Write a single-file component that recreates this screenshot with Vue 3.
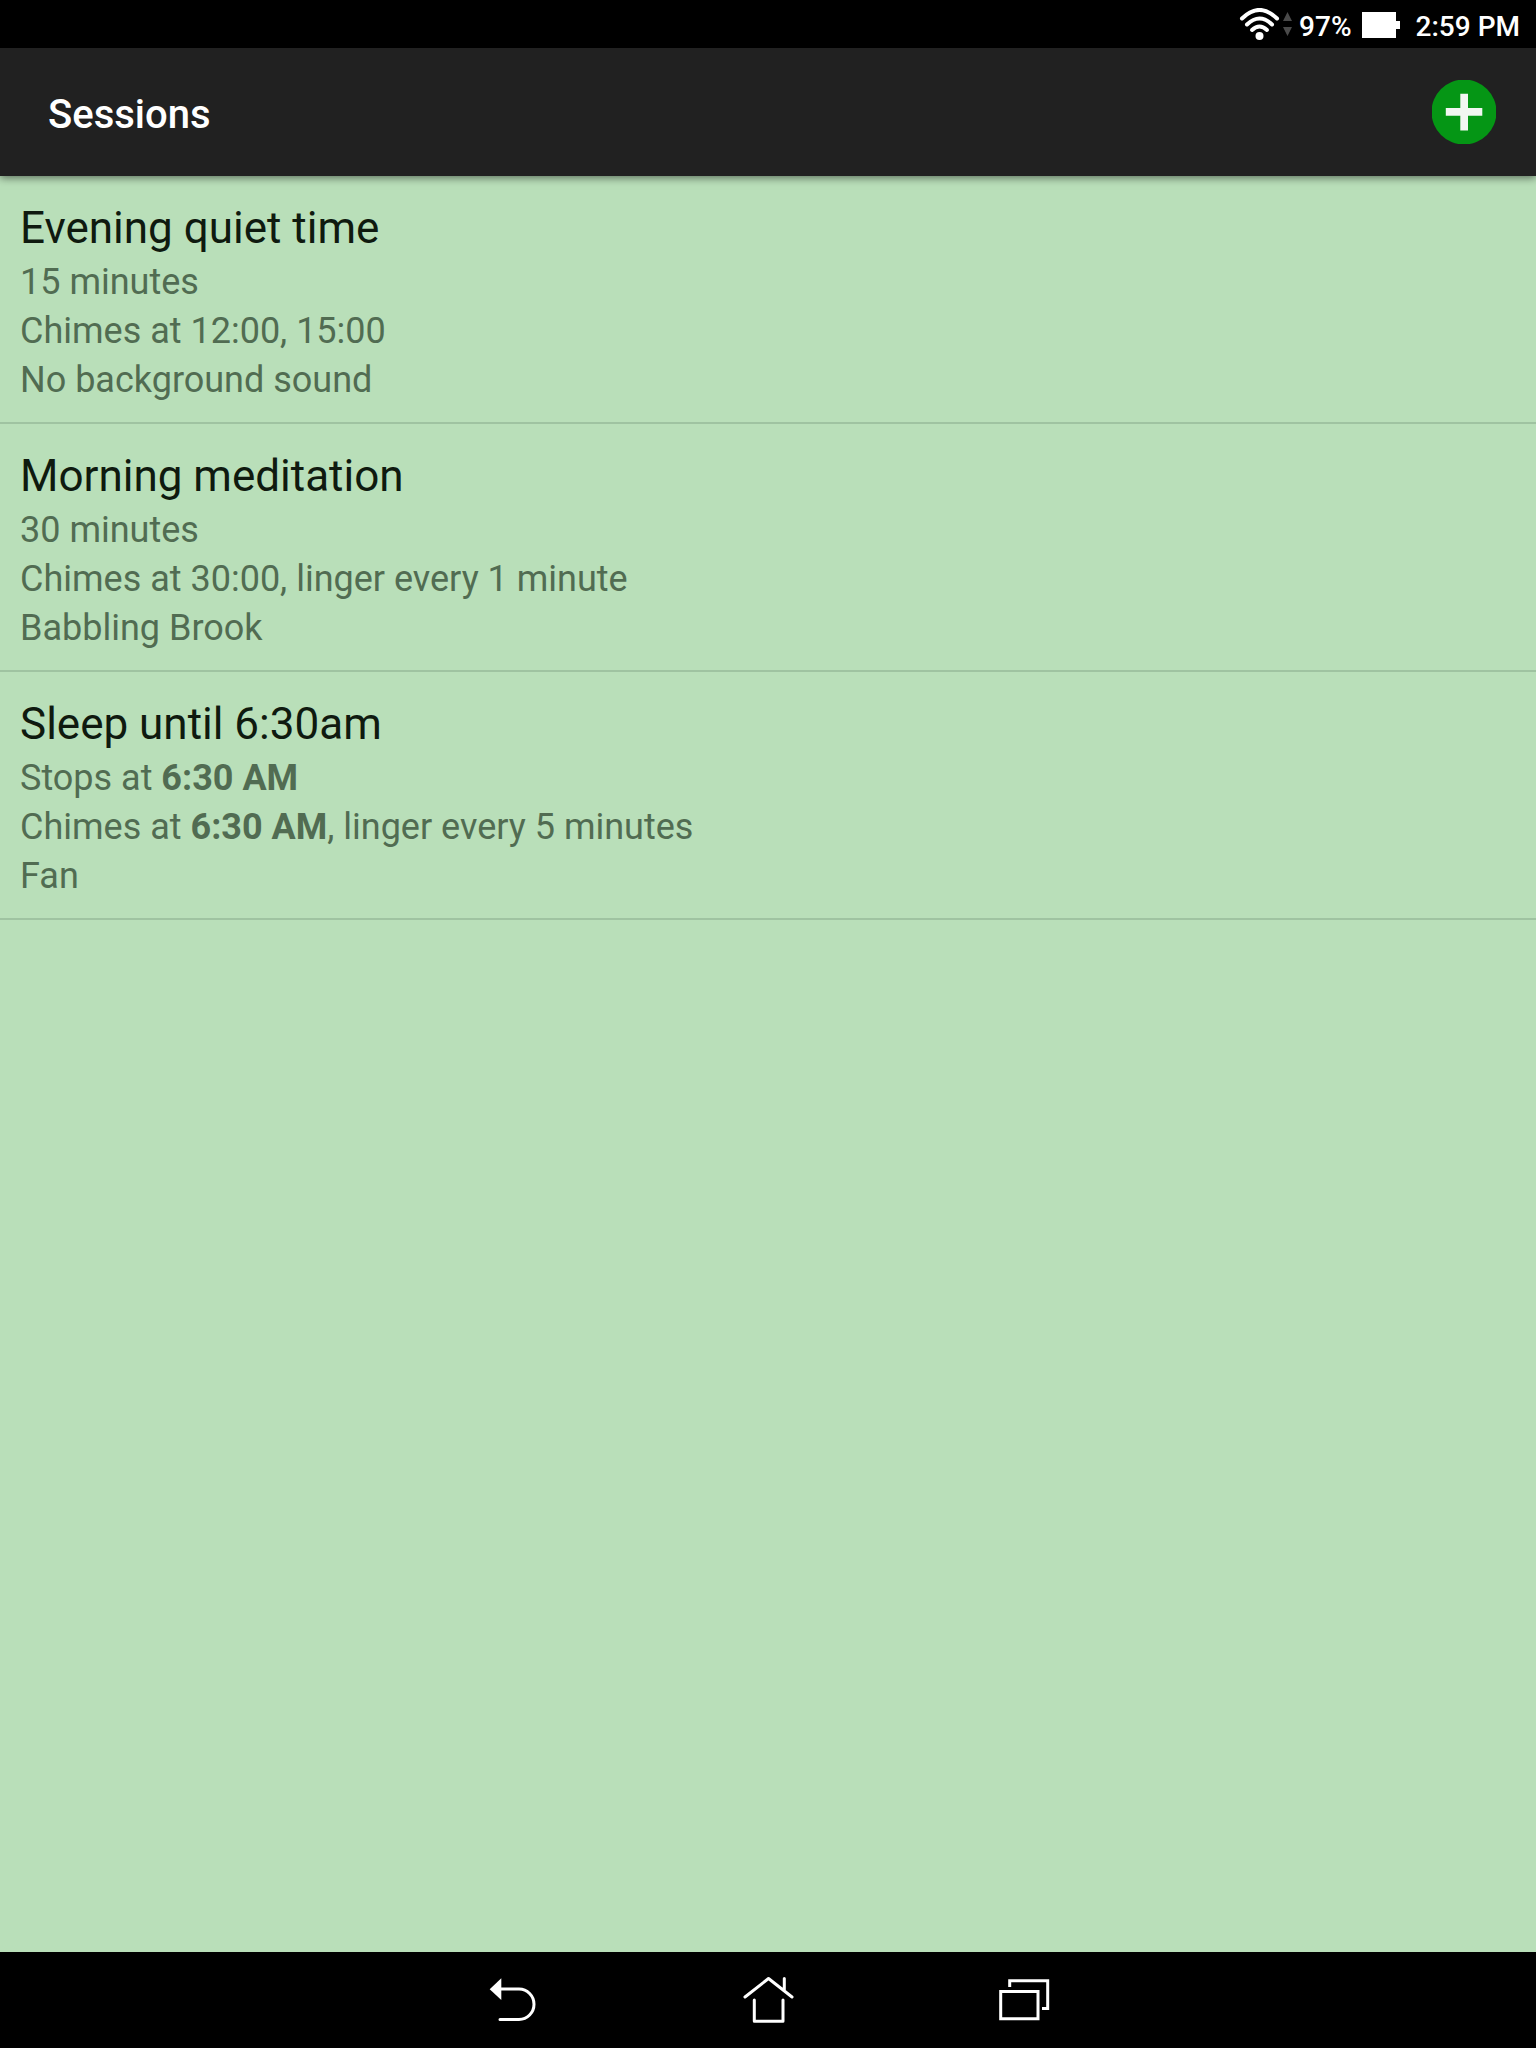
<!--
  Sessions page
  Lists the saved meditation sessions, with a button to add a new one
-->
<template>
  <div class="screen">
    <!-- Status bar -->
    <div class="status-bar">
      <svg class="wifi-icon" viewBox="0 0 56 32" aria-hidden="true">
        <g fill="none" stroke="#fff" stroke-width="4" stroke-linecap="round">
          <path d="M3 10.5Q20.500 -6.500 38 10.500" />
          <path d="M8 16.500Q20.500 4.500 33 16.500" />
          <path d="M13 22Q20.500 15 28 22" />
        </g>
        <circle cx="20.500" cy="28" r="4" fill="#fff" />
        <path d="M44 13L48.500 4L53 13ZM44 19H53L48.500 28Z" fill="#4a4a4a" />
      </svg>
      <span class="battery-level">97%</span>
      <svg class="battery-icon" viewBox="0 0 38 26" aria-hidden="true">
        <path d="M0 0H34V9H38V17H34V26H0Z" fill="#fff" />
      </svg>
      <span class="clock">2:59 PM</span>
    </div>

    <!-- App bar -->
    <header class="app-bar">
      <h1>Sessions</h1>
      <button class="btn-add" aria-label="Add session" @click="addSession">
        <svg viewBox="0 0 64 64" aria-hidden="true">
          <circle cx="32" cy="32" r="32.500" fill="#059615" />
          <path d="M28.300 13.800H36V28H50.300V35.700H36V50.500H28.300V35.700H13.800V28H28.300Z" fill="#f2f7f2" />
        </svg>
      </button>
    </header>

    <!-- Session list -->
    <main class="content">
      <ul class="session-list">
        <li v-for="item in sessions" :key="item.id">
          <button class="session" @click="selectedId = item.id">
            <span class="session-name">{{ item.name }}</span>
            <span v-for="(line, i) in item.details" :key="i" class="session-detail">
              <template v-for="(part, j) in line" :key="j">
                <b v-if="part.bold">{{ part.text }}</b>
                <template v-else>{{ part.text }}</template>
              </template>
            </span>
          </button>
        </li>
      </ul>
    </main>

    <!-- Navigation bar -->
    <nav class="nav-bar">
      <button aria-label="Back">
        <svg viewBox="0 0 64 64" aria-hidden="true">
          <path d="M9.700 21.200L21.300 10.300V32Z" fill="#fff" stroke="none" />
          <path d="M20 21H39A15 15.200 0 0 1 39 51.400H20" />
        </svg>
      </button>
      <button aria-label="Home">
        <svg viewBox="0 0 64 64" aria-hidden="true">
          <path d="M9 29L32.500 10.500L56 29M48.300 10.500V22" />
          <path d="M18.300 32V53.200H47V32" />
        </svg>
      </button>
      <button aria-label="Recent apps">
        <svg class="square" viewBox="0 0 64 64" aria-hidden="true">
          <path d="M8.700 23.500H46V50.700H8.700Z" />
          <path d="M17.700 19V12.800H55.700V40.400H50" />
        </svg>
      </button>
    </nav>
  </div>
</template>

<script setup>
import { ref } from 'vue'

// Session last tapped
const selectedId = ref(null)

// Each detail line is split into plain and bold parts
const sessions = ref([
  {
    id: 1,
    name: 'Evening quiet time',
    details: [
      [{ text: '15 minutes' }],
      [{ text: 'Chimes at 12:00, 15:00' }],
      [{ text: 'No background sound' }]
    ]
  },
  {
    id: 2,
    name: 'Morning meditation',
    details: [
      [{ text: '30 minutes' }],
      [{ text: 'Chimes at 30:00, linger every 1 minute' }],
      [{ text: 'Babbling Brook' }]
    ]
  },
  {
    id: 3,
    name: 'Sleep until 6:30am',
    details: [
      [{ text: 'Stops at ' }, { text: '6:30 AM', bold: true }],
      [{ text: 'Chimes at ' }, { text: '6:30 AM', bold: true }, { text: ', linger every 5 minutes' }],
      [{ text: 'Fan' }]
    ]
  }
])

/** Add an empty session at the end of the list */
function addSession() {
  sessions.value.push({
    id: Date.now(),
    name: 'New session',
    details: [[{ text: '15 minutes' }], [{ text: 'No chimes' }], [{ text: 'No background sound' }]]
  })
}
</script>

<style>
body { margin: 0; background: #b9dfb9; }
</style>

<style scoped>
.screen { display: flex; flex-direction: column; min-height: 100vh; background: #b9dfb9; font-family: Roboto, "Liberation Sans", sans-serif; }
button { padding: 0; border: none; background: none; font: inherit; color: inherit; cursor: pointer; }
svg { display: block; }

/* Status bar */
.status-bar { display: flex; justify-content: flex-end; align-items: center; height: 48px; padding: 0 16px; background: #000; color: #fff; font-size: 28px; font-weight: 500; line-height: 42px; }
.status-bar span { padding-top: 6px; }
.wifi-icon { width: 56px; height: 32px; margin-right: 4px; }
.battery-icon { width: 38px; height: 26px; margin: 2px 16px 0 10px; }

/* App bar */
.app-bar { display: flex; justify-content: space-between; align-items: center; height: 128px; padding: 0 40px 0 48px; background: #212121; color: #fff; box-shadow: 0 2px 8px rgba(0, 0, 0, 0.5); z-index: 1; }
.app-bar h1 { margin: 0; padding-top: 6px; font-size: 40px; font-weight: 500; line-height: 48px; }
.btn-add svg { width: 64px; height: 64px; }

/* Session list */
.content { flex: 1; }
.session-list { margin: 0; padding: 0; list-style: none; }
.session { display: block; width: 100%; padding: 24px 20px 17px; border-bottom: 2px solid #9fc3a1; text-align: left; }
.session-name { display: block; color: #0f1a0f; font-size: 44px; line-height: 57px; padding-bottom: 1px; }
.session-detail { display: block; color: #516c52; font-size: 36px; line-height: 49px; white-space: pre-wrap; }

/* Navigation bar */
.nav-bar { display: flex; justify-content: center; height: 96px; background: #000; }
.nav-bar button { display: flex; justify-content: center; align-items: center; width: 256px; }
.nav-bar svg { width: 64px; height: 64px; fill: none; stroke: #fff; stroke-width: 3; stroke-linecap: round; stroke-linejoin: round; }
.nav-bar .square { stroke-linecap: butt; stroke-linejoin: miter; }
</style>
